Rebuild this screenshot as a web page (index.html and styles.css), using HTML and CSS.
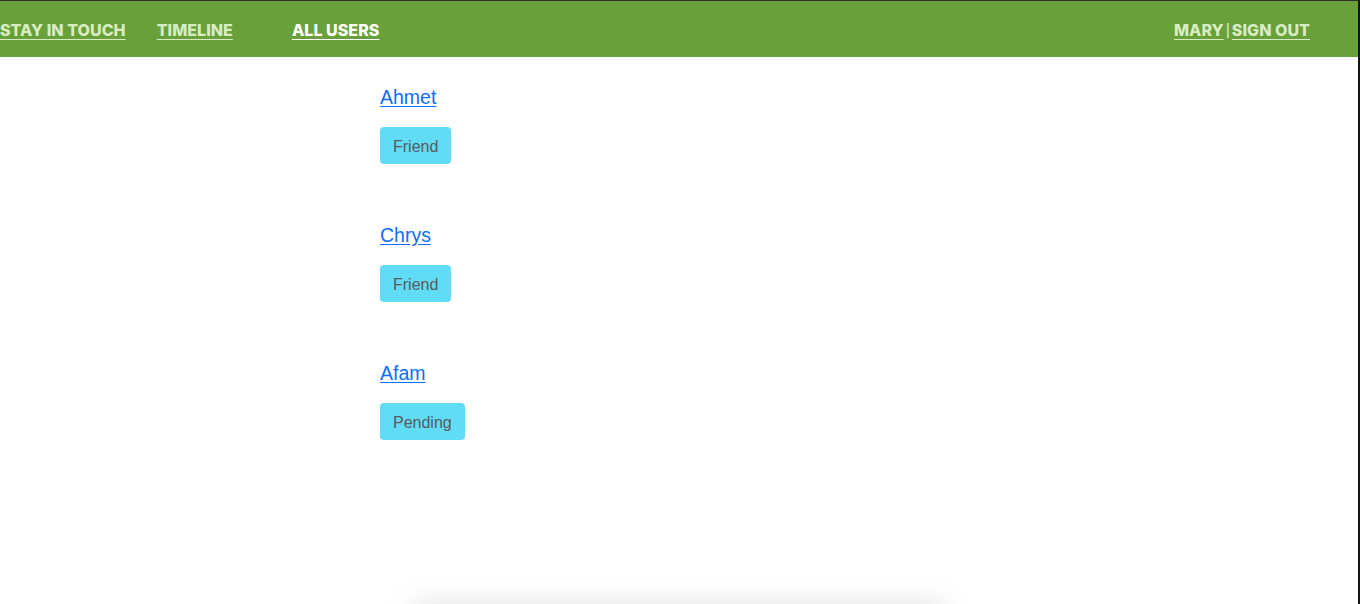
FILE: index.html
```html
<!DOCTYPE html>
<html>
<head>
<meta charset="utf-8">
<link rel="stylesheet" href="styles.css">
</head>
<body>
<div class="frame">
  <header class="topbar">
    <nav class="nav-left">
      <a class="nav-link brand" href="#">STAY IN TOUCH</a>
      <a class="nav-link timeline" href="#">TIMELINE</a>
      <a class="nav-link active" href="#">ALL USERS</a>
    </nav>
    <nav class="nav-right">
      <a class="nav-link" href="#">MARY</a><span class="sep">|</span><a class="nav-link" href="#">SIGN OUT</a>
    </nav>
  </header>
  <main class="users">
    <div class="user">
      <a class="user-name" href="#">Ahmet</a>
      <button class="status">Friend</button>
    </div>
    <div class="user">
      <a class="user-name" href="#">Chrys</a>
      <button class="status">Friend</button>
    </div>
    <div class="user">
      <a class="user-name" href="#">Afam</a>
      <button class="status">Pending</button>
    </div>
  </main>
  <div class="notice"></div>
</div>
</body>
</html>
```
FILE: styles.css
```css
html, body {
  margin: 0;
  padding: 0;
  height: 100%;
  overflow: hidden;
  background: #ffffff;
}
body {
  font-family: "Liberation Sans", Arial, sans-serif;
}
.frame {
  height: 603px;
  border-top: 1px solid #2e2e30;
  border-right: 2px solid #141414;
  overflow: hidden;
  background: #fff;
}
.topbar {
  box-sizing: border-box;
  height: 56px;
  padding-top: 2px;
  background: #68a039;
  display: flex;
  align-items: center;
  justify-content: space-between;
  padding-right: 48px;
}
.nav-left, .nav-right {
  display: flex;
  align-items: center;
}
.nav-link {
  font-family: Inter, "Liberation Sans", sans-serif;
  font-weight: 800;
  font-size: 16px;
  color: #d8ecc3;
  text-decoration: underline;
  text-underline-offset: 3px;
  text-decoration-thickness: 1px;
  letter-spacing: 0.05px;
}
.timeline {
  margin-left: 31px;
}
.active {
  margin-left: 59px;
  color: #ffffff;
}
.sep {
  color: #d8ecc3;
  font-family: "Liberation Sans", sans-serif;
  font-size: 16px;
  margin: 0 2px;
}
.users {
  margin-left: 380px;
  padding-top: 25px;
}
.user {
  display: flex;
  flex-direction: column;
  align-items: flex-start;
  margin-bottom: 56px;
}
.user-name {
  font-size: 19.5px;
  line-height: 30px;
  color: #0d6efd;
  text-decoration: underline;
  text-underline-offset: 2px;
}
.status {
  margin-top: 15px;
  height: 37px;
  padding: 2px 13px 0;
  border: none;
  border-radius: 4px;
  background: #61dcf6;
  color: #555b60;
  font-family: "Liberation Sans", Arial, sans-serif;
  font-size: 16px;
}
.notice {
  width: 530px;
  height: 60px;
  margin: 170px auto 0;
  background: #fff;
  box-shadow: 0 -4px 30px rgba(0, 0, 0, 0.14);
}
```
